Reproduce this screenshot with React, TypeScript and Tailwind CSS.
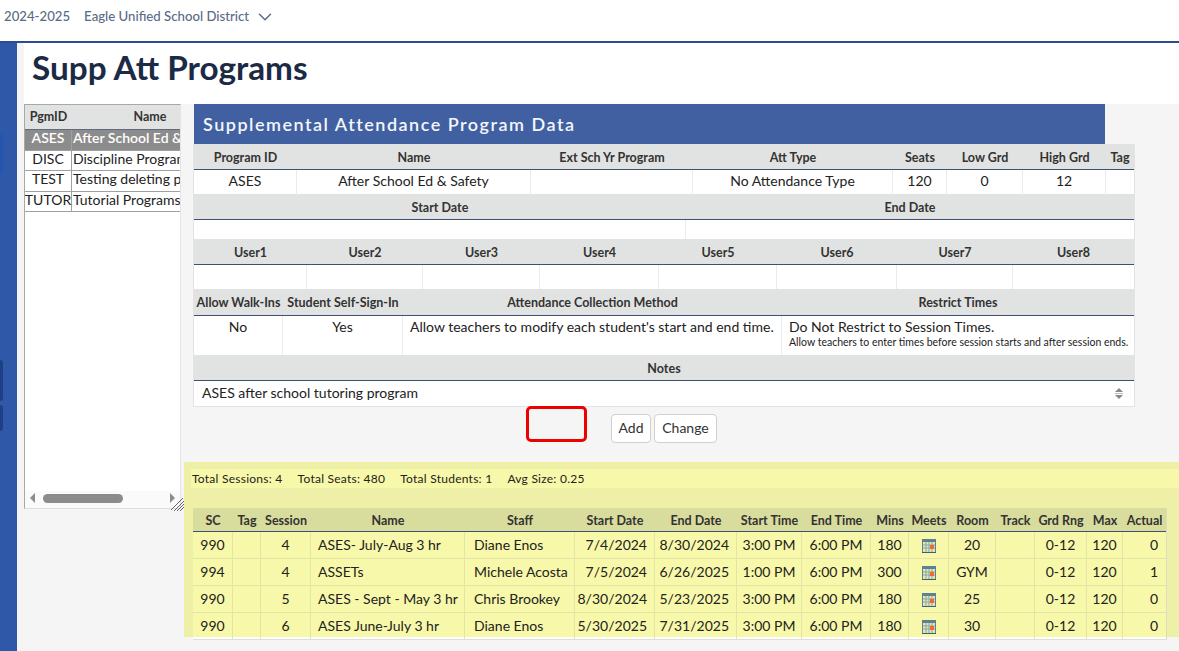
import { ChevronDown } from "lucide-react";

const programs = [
  { id: "ASES", name: "After School Ed & Safety", selected: true },
  { id: "DISC", name: "Discipline Program" },
  { id: "TEST", name: "Testing deleting program" },
  { id: "TUTOR", name: "Tutorial Programs" },
];

const sessions = [
  ["990", "", "4", "ASES- July-Aug 3 hr", "Diane Enos", "7/4/2024", "8/30/2024", "3:00 PM", "6:00 PM", "180", "20", "", "0-12", "120", "0"],
  ["994", "", "4", "ASSETs", "Michele Acosta", "7/5/2024", "6/26/2025", "1:00 PM", "6:00 PM", "300", "GYM", "", "0-12", "120", "1"],
  ["990", "", "5", "ASES - Sept - May 3 hr", "Chris Brookey", "8/30/2024", "5/23/2025", "3:00 PM", "6:00 PM", "180", "25", "", "0-12", "120", "0"],
  ["990", "", "6", "ASES June-July 3 hr", "Diane Enos", "5/30/2025", "7/31/2025", "3:00 PM", "6:00 PM", "180", "30", "", "0-12", "120", "0"],
];

const sessionHeads = ["SC", "Tag", "Session", "Name", "Staff", "Start Date", "End Date", "Start Time", "End Time", "Mins", "Meets", "Room", "Track", "Grd Rng", "Max", "Actual"];

const CalendarIcon = () => (
  <svg width="14" height="14" viewBox="0 0 14 14" className="mt-[1px]">
    <rect x="0" y="0" width="14" height="14" fill="#5b8294" />
    <rect x="1" y="3" width="12" height="10" fill="#e4e6b4" />
    <path d="M4 3v10M7 3v10M10 3v10M1 6h12M1 9h12" stroke="#8ba5a0" strokeWidth="1" />
    <rect x="8" y="6" width="4" height="4" fill="#ef6a3a" />
    <rect x="0" y="13" width="14" height="1" fill="#3c6078" />
  </svg>
);

const Head = ({ children }: { children?: React.ReactNode }) => (
  <div className="flex items-center justify-center whitespace-nowrap pt-[3px] text-[12.5px] font-bold text-[#333]">{children}</div>
);

const HeaderRow = ({ cols, items, h = "h-[26px]" }: { cols: string; items: string[]; h?: string }) => (
  <div className={`grid ${cols} ${h} border-b border-[#3b5072] bg-[#e1e3e2]`}>
    {items.map((item) => (
      <Head key={item}>{item}</Head>
    ))}
  </div>
);

const ValueRow = ({ cols, items, h }: { cols: string; items: string[]; h: string }) => (
  <div className={`grid ${cols} ${h} bg-white`}>
    {items.map((item, i) => (
      <div key={i} className="flex items-center justify-center border-r border-[#e6ecef] pb-[4px] text-[14px] text-[#222] last:border-r-0">
        {item}
      </div>
    ))}
  </div>
);

const Tick = ({ className }: { className: string }) => <div className={`h-px w-[3px] bg-[#2a5cb0] ${className}`} />;

export default function App() {
  const row1 = "grid-cols-[103px_234px_162px_200px_54px_76px_83px_28px]";
  const row2 = "grid-cols-[492px_448px]";
  const row3 = "grid-cols-[113px_116px_117px_119px_118px_120px_116px_121px]";
  const row4 = "grid-cols-[89px_120px_379px_352px]";
  return (
    <div className="h-[651px] w-[1179px] overflow-hidden bg-white font-['Lato',sans-serif]">
      <header className="flex h-[43px] items-center border-b-2 border-[#2a4c97] pb-[8px] text-[13.2px] font-medium text-[#5a6b86]">
        <span className="ml-1">2024-2025</span>
        <span className="ml-[14px]">Eagle Unified School District</span>
        <ChevronDown size={22} strokeWidth={1.6} className="ml-[5px]" />
      </header>

      <div className="flex h-[608px]">
        <aside className="flex w-[17px] shrink-0 flex-col bg-[#3058a8]">
          <Tick className="mt-[82px]" />
          <div className="mt-[8px] h-[39px] w-[3px] rounded-r bg-[#2456b0]" />
          <Tick className="mt-[8px]" />
          <Tick className="mt-[43px]" />
          <Tick className="mt-[43px]" />
          <Tick className="mt-[43px]" />
          <Tick className="mt-[45px]" />
          <div className="h-[41px] w-[3px] rounded-r bg-[#1f3f85]" />
          <div className="mt-[4px] h-[26px] w-[3px] rounded-r bg-[#1f3f85]" />
          <Tick className="mt-[162px]" />
          <Tick className="mt-[44px]" />
        </aside>
        <div className="w-[7px] shrink-0 bg-[#f5f5f5]" />

        <main className="flex min-w-0 flex-1 flex-col bg-[#f5f5f5]">
          <div className="h-[61px] bg-white pl-2 pt-[4px]">
            <h1 className="text-[33.3px] font-bold leading-[40px] text-[#1c2b45]">Supp Att Programs</h1>
          </div>

          <div className="relative flex flex-1">
            <div className="relative flex h-[405px] w-[157px] shrink-0 flex-col overflow-hidden border-b border-l border-r border-t border-b-[#dedede] border-l-[#a8a8a8] border-r-[#e4e4e4] border-t-[#a8a8a8] bg-white">
              <div className="grid h-[25px] shrink-0 grid-cols-[47px_156px] border-b border-[#5f6b7a] bg-[#e1e3e2] pt-[1px] text-[12.5px] font-bold text-[#333]">
                <div className="flex items-center justify-center">PgmID</div>
                <div className="flex items-center justify-center">Name</div>
              </div>
              {programs.map((p) => (
                <div
                  key={p.id}
                  className={`grid h-[20.5px] shrink-0 grid-cols-[47px_150px] border-b border-[#a0a0a0] text-[14px] leading-[16px] ${p.selected ? "bg-[#8c8c8c] font-semibold text-white" : "text-[#222]"}`}
                >
                  <div className="flex items-start justify-center border-r border-[#a0a0a0]">{p.id}</div>
                  <div className="whitespace-nowrap pl-[1px]">{p.name}</div>
                </div>
              ))}
              <div className="mt-auto flex h-[17px] items-center bg-[#fafafa] pb-[3px]">
                <div className="ml-[5px] h-0 w-0 border-y-[5px] border-r-[5px] border-y-transparent border-r-[#8c8c8c]" />
                <div className="ml-[8px] h-[9px] w-[80px] rounded-full bg-[#8c8c8c]" />
                <div className="ml-[47px] h-0 w-0 border-y-[5px] border-l-[5px] border-y-transparent border-l-[#8c8c8c]" />
              </div>
            </div>
            <svg width="13" height="13" viewBox="0 0 13 13" className="absolute left-[147px] top-[394px]">
              <path d="M0 12L12 0M3 13L13 3M6 13L13 6M9 13L13 9" stroke="#666" strokeWidth="1" />
            </svg>

            <div className="ml-[13px] w-[941px] shrink-0">
              <div className="flex h-[40px] w-[911px] items-center bg-[#4160a2] pl-[9px] text-[18px] font-semibold tracking-[1.5px] text-[#f4f6fa]">
                Supplemental Attendance Program Data
              </div>
              <div className="-ml-px border-b border-l border-r border-[#e3e3e3]">
                <HeaderRow cols={row1} items={["Program ID", "Name", "Ext Sch Yr Program", "Att Type", "Seats", "Low Grd", "High Grd", "Tag"]} />
                <ValueRow cols={row1} h="h-[24px]" items={["ASES", "After School Ed & Safety", "", "No Attendance Type", "120", "0", "12", ""]} />
                <HeaderRow cols={row2} items={["Start Date", "End Date"]} />
                <ValueRow cols={row2} h="h-[19px]" items={["", ""]} />
                <HeaderRow cols={row3} items={["User1", "User2", "User3", "User4", "User5", "User6", "User7", "User8"]} />
                <ValueRow cols={row3} h="h-[24px]" items={["", "", "", "", "", "", "", ""]} />
                <HeaderRow cols={row4} h="h-[27px]" items={["Allow Walk-Ins", "Student Self-Sign-In", "Attendance Collection Method", "Restrict Times"]} />
                <div className={`grid h-[39px] ${row4} bg-white text-[14px] text-[#222]`}>
                  <div className="border-r border-[#e6ecef] text-center">No</div>
                  <div className="border-r border-[#e6ecef] text-center">Yes</div>
                  <div className="whitespace-nowrap border-r border-[#e6ecef] pl-[7px]">Allow teachers to modify each student's start and end time.</div>
                  <div className="pl-[7px] pt-[2px] leading-[18px]">
                    <div>Do Not Restrict to Session Times.</div>
                    <div className="whitespace-nowrap text-[10.5px] leading-[12px]">Allow teachers to enter times before session starts and after session ends.</div>
                  </div>
                </div>
                <HeaderRow cols="grid-cols-1" items={["Notes"]} />
                <div className="flex h-[25px] items-center justify-between bg-white pl-2 pr-[11px] text-[14px] text-[#222]">
                  <span className="pb-[2px]">ASES after school tutoring program</span>
                  <span className="flex flex-col items-center gap-[1px]">
                    <span className="h-0 w-0 border-x-[4px] border-b-[4px] border-x-transparent border-b-[#888]" />
                    <span className="h-px w-[8px] bg-[#bbb]" />
                    <span className="h-0 w-0 border-x-[4px] border-t-[4px] border-x-transparent border-t-[#888]" />
                  </span>
                </div>
              </div>
              <div className="mt-[7px] flex gap-[3px] pl-[417px]">
                <button className="h-[29px] w-[40px] rounded border border-[#d0d0d0] bg-white pb-[2px] text-[14px] text-[#333]">Add</button>
                <button className="h-[29px] w-[63px] rounded border border-[#d0d0d0] bg-white pb-[2px] text-[14px] text-[#333]">Change</button>
              </div>
            </div>

            <div className="absolute left-[502px] top-[302px] h-[36px] w-[61px] rounded-[5px] border-[3px] border-[#ee0000]" />

            <section className="absolute left-[160px] top-[358px] h-[175px] w-[995px] bg-[#eff0a8]">
              <div className="ml-[7px] mt-[7px] flex h-[19px] items-center gap-[15px] bg-[#f7f8a9] pl-[1px] text-[12px] tracking-[0.25px] text-[#222]">
                <span>Total Sessions: 4</span>
                <span>Total Seats: 480</span>
                <span>Total Students: 1</span>
                <span>Avg Size: 0.25</span>
              </div>
              <div className="absolute left-[9px] top-[46px] w-[974px] border-r border-[#dcdcc0]">
                <div className="grid h-[24px] grid-cols-[40px_28px_50px_154px_110px_80px_82px_65px_69px_38px_40px_47px_39px_52px_36px_43px] items-center border-b border-[#3b5072] bg-[#d8dc9c] pt-[3px] text-[12.5px] font-bold text-[#333]">
                  {sessionHeads.map((h) => (
                    <div key={h} className="whitespace-nowrap text-center">{h}</div>
                  ))}
                </div>
                {sessions.map((s, i) => (
                  <div
                    key={i}
                    className={`grid h-[27px] grid-cols-[40px_28px_50px_154px_110px_80px_82px_65px_69px_38px_40px_47px_39px_52px_36px_43px] border-b text-[14px] text-[#222] ${i === 3 ? "border-[#dedede] bg-[linear-gradient(#f7f8a9_24px,#ffffff_24px)]" : "border-[#e2e5a6] bg-[#f7f8a9]"}`}
                  >
                    {s.slice(0, 10).map((v, j) => (
                      <div
                        key={j}
                        className={`flex items-center whitespace-nowrap border-r border-[#e2e5a6] pb-[1px] ${j === 3 ? "pl-[7px]" : j === 4 ? "pl-[9px]" : j === 5 || j === 6 ? "justify-end pr-[7px]" : "justify-center"}`}
                      >
                        {v}
                      </div>
                    ))}
                    <div className="flex items-center justify-center border-r border-[#e2e5a6]">
                      <CalendarIcon />
                    </div>
                    {s.slice(10, 14).map((v, j) => (
                      <div key={j} className="flex items-center justify-center border-r border-[#e2e5a6] pb-[1px]">{v}</div>
                    ))}
                    <div className="flex items-center justify-end pb-[1px] pr-[8px]">{s[14]}</div>
                  </div>
                ))}
              </div>
            </section>
          </div>
        </main>
      </div>
    </div>
  );
}
